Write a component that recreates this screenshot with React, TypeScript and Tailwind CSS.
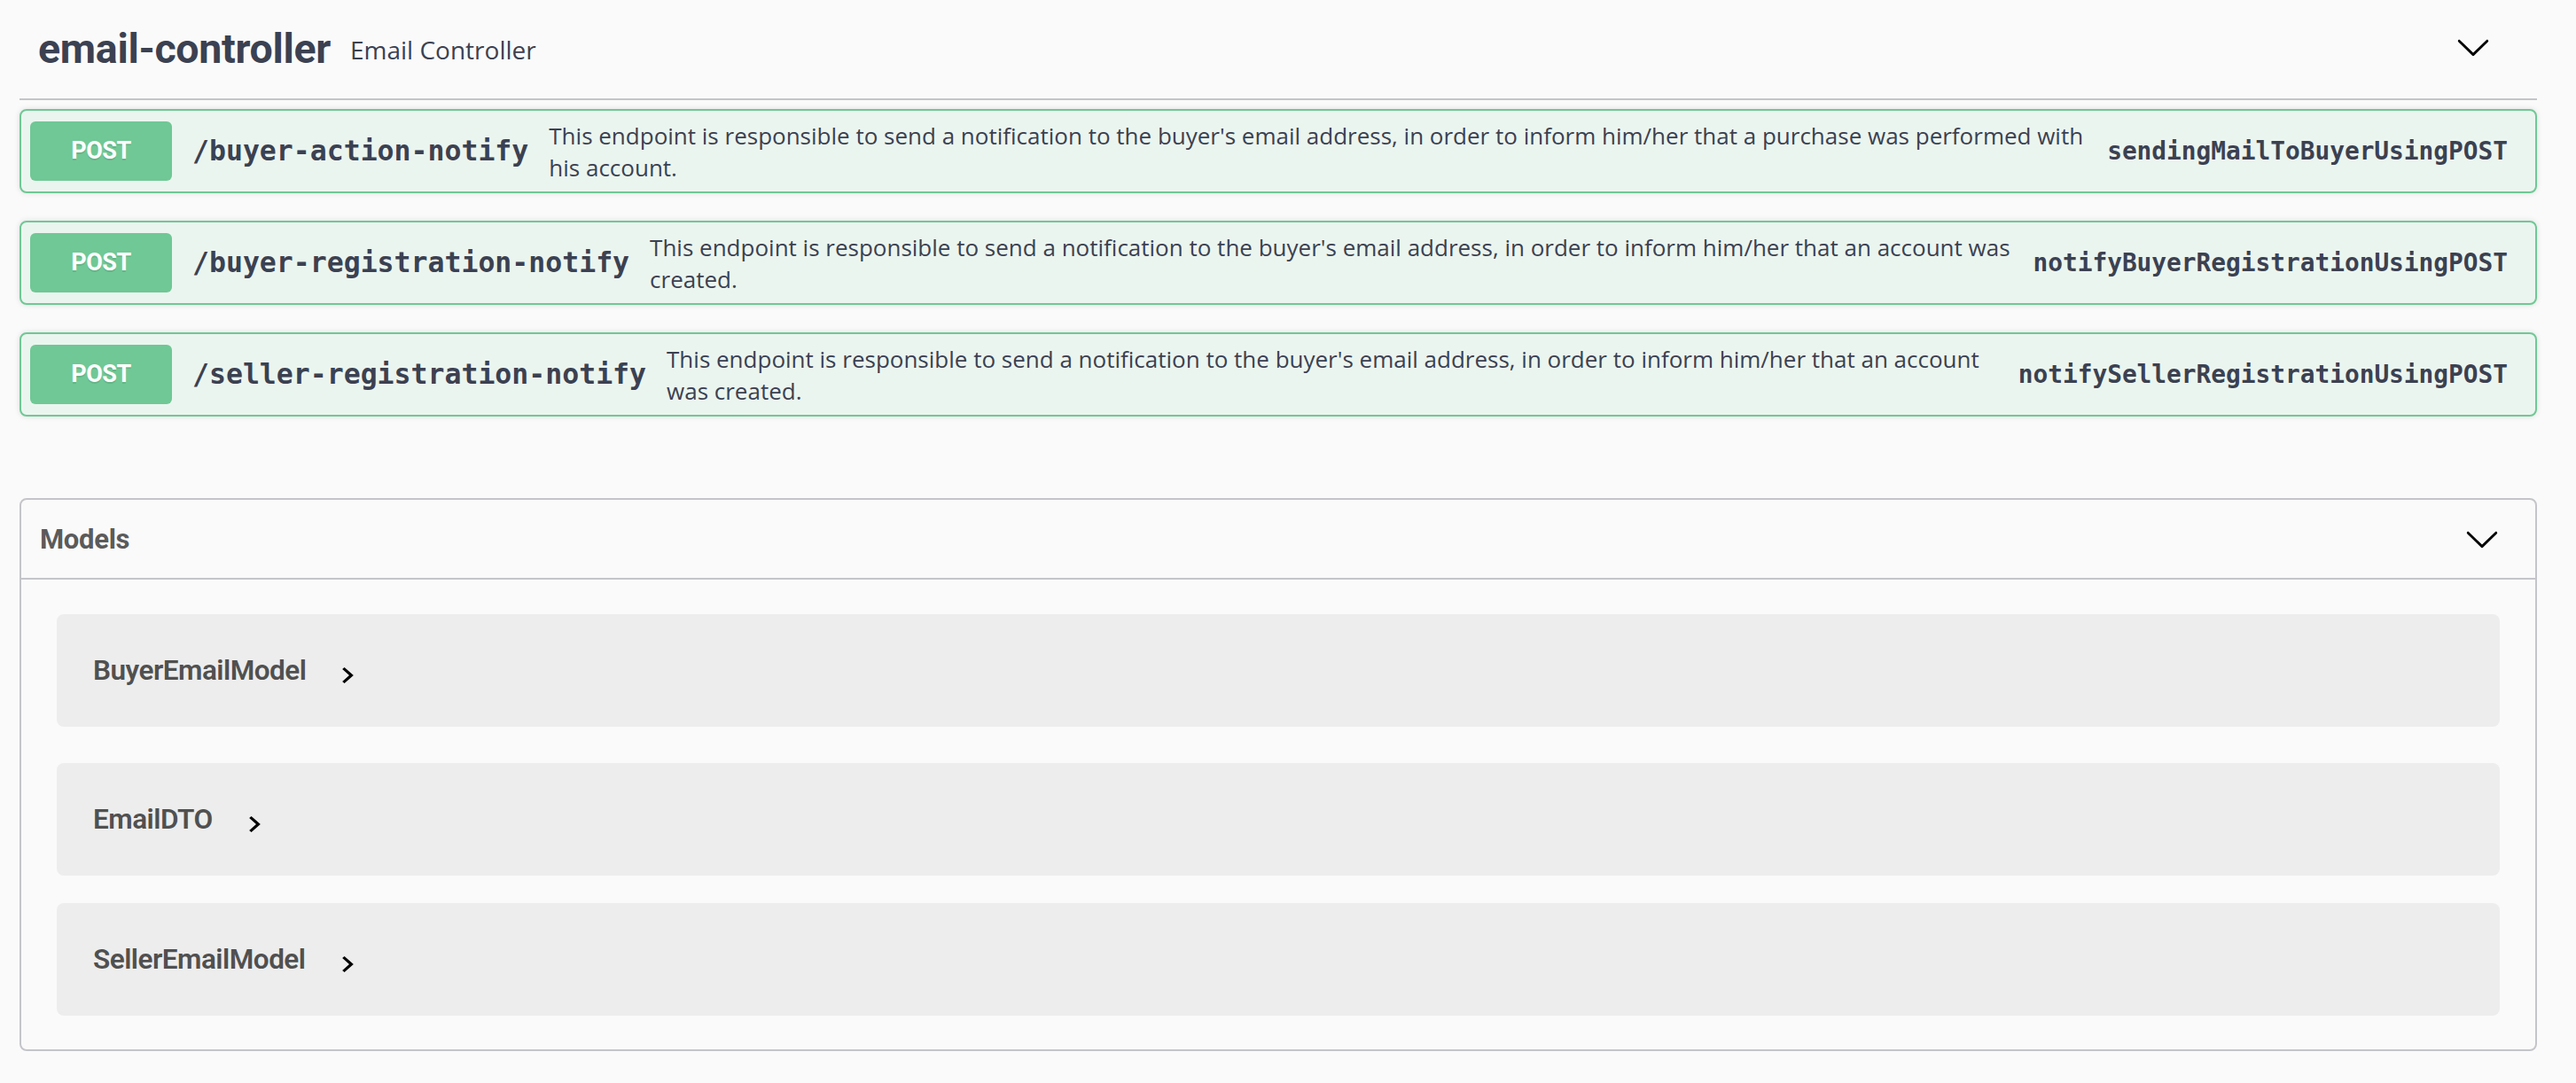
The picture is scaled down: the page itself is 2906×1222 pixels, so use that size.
import React from "react";

const ops = [
  {
    path: "/buyer-action-notify",
    desc: "This endpoint is responsible to send a notification to the buyer's email address, in order to inform him/her that a purchase was performed with his account.",
    opId: "sendingMailToBuyerUsingPOST",
  },
  {
    path: "/buyer-registration-notify",
    desc: "This endpoint is responsible to send a notification to the buyer's email address, in order to inform him/her that an account was created.",
    opId: "notifyBuyerRegistrationUsingPOST",
  },
  {
    path: "/seller-registration-notify",
    desc: "This endpoint is responsible to send a notification to the buyer's email address, in order to inform him/her that an account was created.",
    opId: "notifySellerRegistrationUsingPOST",
  },
];

const models = ["BuyerEmailModel", "EmailDTO", "SellerEmailModel"];

function ChevronDown() {
  return (
    <svg width="40" height="40" viewBox="0 0 20 20" className="shrink-0">
      <path
        fill="#000"
        d="M17.418 6.109c.272-.268.709-.268.979 0s.271.701 0 .969l-7.908 7.83c-.27.268-.707.268-.979 0l-7.908-7.83c-.27-.268-.27-.701 0-.969.271-.268.709-.268.979 0L10 13.25l7.418-7.141z"
      />
    </svg>
  );
}

function ChevronRight() {
  return (
    <svg width="13" height="18" viewBox="8.5 6 7.6 12" preserveAspectRatio="none" className="shrink-0">
      <path fill="#000" d="M10 6L8.59 7.41 13.17 12l-4.58 4.59L10 18l6-6z" />
    </svg>
  );
}

export default function App() {
  return (
    <div className="min-h-screen bg-[#fafafa] pl-[22px] pr-[44px] font-['Roboto',sans-serif] text-[#3b4151]">
      <div className="flex h-[113px] items-center border-b-2 border-[#c4c5c9] pl-[21px]">
        <h4 className="text-[46.5px] font-bold leading-none tracking-[-0.3px] text-[#3b4151]">email-controller</h4>
        <small className="flex-1 pl-[22px] font-['Open_Sans',sans-serif] text-[28px] leading-none text-[#3b4151]">
          Email Controller
        </small>
        <div className="mr-[52px] mt-[-6px]">
          <ChevronDown />
        </div>
      </div>

      <div className="mt-[10px] flex flex-col gap-[31px]">
        {ops.map((op) => (
          <div
            key={op.path}
            className="flex h-[95px] items-center rounded-[8px] border-2 border-[#6fc895] bg-[#ebf5ef] pl-[10px] pr-[31px] shadow-[0_0_6px_rgba(0,0,0,0.12)]"
          >
            <div className="flex h-[67px] w-[160px] shrink-0 items-center justify-center rounded-[6px] bg-[#6fc895] text-[27px] font-bold tracking-[-0.5px] text-white [text-shadow:0_2px_0_rgba(0,0,0,0.1)]">
              POST
            </div>
            <span className="shrink-0 px-[23px] font-['DejaVu_Sans_Mono',monospace] text-[31.5px] font-bold leading-none text-[#3b4151]">
              {op.path}
            </span>
            <div className="flex-1 font-['Open_Sans',sans-serif] text-[26px] leading-[36px] text-[#3b4151]">
              {op.desc}
            </div>
            <span className="shrink-0 pl-[20px] font-['DejaVu_Sans_Mono',monospace] text-[27.8px] font-bold leading-none text-[#3b4151]">
              {op.opId}
            </span>
          </div>
        ))}
      </div>

      <section className="mt-[92px] rounded-[8px] border-2 border-[#c4c5c9]">
        <div className="flex h-[90px] items-center justify-between border-b-2 border-[#c4c5c9] pl-[21px] pr-[40px]">
          <h4 className="text-[31px] font-bold leading-none tracking-[-0.3px] text-[#5b5b5b]">Models</h4>
          <ChevronDown />
        </div>
        <div className="flex flex-col px-[40px] pb-[38px] pt-[39px]">
          {models.map((m, i) => (
            <div
              key={m}
              className={
                "flex h-[127px] items-center rounded-[8px] bg-[#ededed] pl-[41px] " +
                (i === 0 ? "mb-[41px]" : i === 1 ? "mb-[31px]" : "")
              }
            >
              <span className="text-[31.5px] font-semibold leading-none tracking-[-0.5px] text-[#505050]">{m}</span>
              <span className="ml-[41px] mt-[10px]">
                <ChevronRight />
              </span>
            </div>
          ))}
        </div>
      </section>
    </div>
  );
}
